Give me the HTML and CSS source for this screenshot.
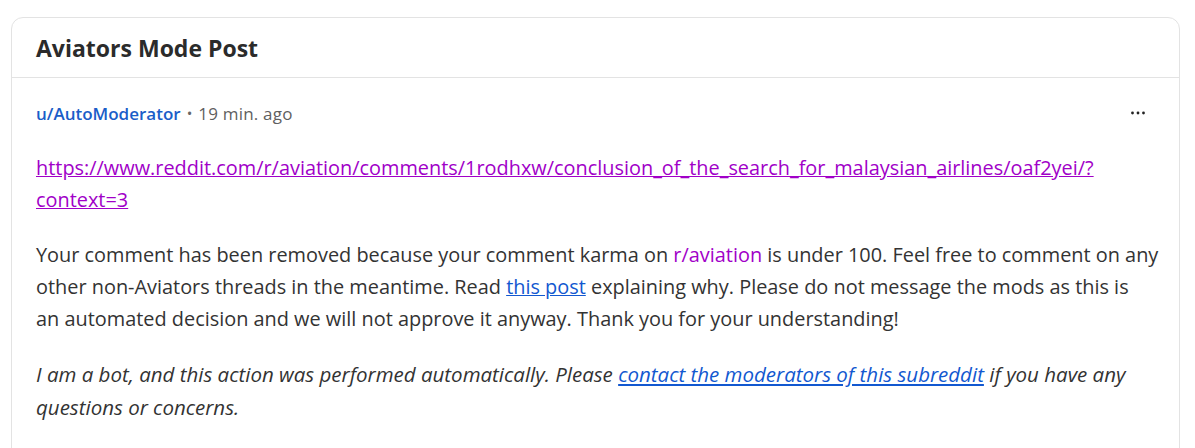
FILE: index.html
```html
<!DOCTYPE html>
<html lang="en">
<head>
<meta charset="utf-8">
<title>Aviators Mode Post</title>
<link rel="stylesheet" href="styles.css">
</head>
<body>
<div class="page">
  <section class="card">
    <header class="card-header">
      <h2 class="card-title">Aviators Mode Post</h2>
    </header>
    <div class="card-body">
      <div class="meta">
        <div class="meta-left">
          <a class="author" href="#">u/AutoModerator</a>
          <span class="sep">•</span>
          <span class="time">19 min. ago</span>
        </div>
        <button class="more" aria-label="More options">
          <svg width="14" height="4" viewBox="0 0 14 4"><circle cx="1.5" cy="2" r="1.4"/><circle cx="7" cy="2" r="1.4"/><circle cx="12.5" cy="2" r="1.4"/></svg>
        </button>
      </div>
      <div class="content">
        <p><a class="visited" href="#">https://www.reddit.com/r/aviation/comments/1rodhxw/conclusion_of_the_search_for_malaysian_airlines/oaf2yei/?<wbr>context=3</a></p>
        <p>Your comment has been removed because your comment karma on <a class="sub" href="#">r/aviation</a> is under 100. Feel free to comment on any other non-Aviators threads in the meantime. Read <a class="link" href="#">this post</a> explaining why. Please do not message the mods as this is an&nbsp;automated decision and we will not approve it anyway. Thank you for your understanding!</p>
        <p class="bot"><em>I am a bot, and this action was performed automatically. Please <a class="link" href="#">contact the moderators of this subreddit</a> if you have any questions or concerns.</em></p>
      </div>
    </div>
  </section>
</div>
</body>
</html>
```
FILE: styles.css
```css
html, body {
  margin: 0;
  padding: 0;
  background: #ffffff;
}
body {
  font-family: "Open Sans", "Noto Sans", "Liberation Sans", sans-serif;
  color: #333333;
}
.page {
  padding: 17px 15px 0 11px;
}
.card {
  border: 1px solid #e3e3e3;
  border-radius: 12px;
  background: #fff;
  height: 460px;
}
.card-header {
  height: 60px;
  box-sizing: border-box;
  border-bottom: 1px solid #e3e3e3;
  padding: 0 24px;
  display: flex;
  align-items: center;
}
.card-title {
  margin: 0;
  font-size: 23px;
  font-weight: 700;
  color: #2b2b2b;
}
.card-body {
  padding: 23px 18px 0 24px;
}
.meta {
  display: flex;
  justify-content: space-between;
  align-items: center;
  height: 24px;
  font-size: 17px;
}
.meta-left {
  display: flex;
  align-items: center;
  gap: 6px;
}
.author {
  color: #1a5dc8;
  font-weight: 600;
  text-decoration: none;
}
.sep {
  color: #666;
  font-size: 15px;
}
.time {
  color: #5f5f5f;
  letter-spacing: 0.2px;
}
.more {
  border: 0;
  background: transparent;
  padding: 0;
  margin-right: 16px;
  width: 14px;
  height: 4px;
  display: flex;
}
.more svg {
  fill: #222;
}
.content {
  padding-top: 27px;
  font-size: 19.9px;
  line-height: 32px;
}
.content p {
  margin: 0 0 23px;
}
.visited {
  color: #a100c8;
  text-decoration: underline;
}
.sub {
  color: #a100c8;
  text-decoration: none;
}
.link {
  color: #1258d0;
  text-decoration: underline;
}
.bot em {
  font-style: italic;
  font-size: 20.5px;
}
```
